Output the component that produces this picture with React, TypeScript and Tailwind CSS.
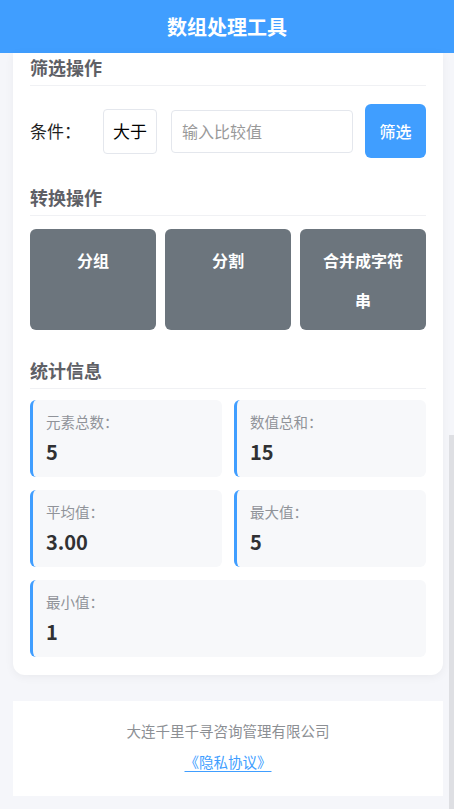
import React from "react";

const FONT = { fontFamily: '"Noto Sans CJK SC", "Noto Sans", sans-serif' };

const stats = [
  { label: "元素总数：", value: "5" },
  { label: "数值总和：", value: "15" },
  { label: "平均值：", value: "3.00" },
  { label: "最大值：", value: "5" },
  { label: "最小值：", value: "1", wide: true },
];

function SectionTitle({ children, className = "" }: { children: React.ReactNode; className?: string }) {
  return (
    <h3 className={`text-[18px] leading-[26px] font-bold text-[#5e6066] pb-[5px] border-b border-[#f0f1f4] ${className}`}>
      {children}
    </h3>
  );
}

export default function App() {
  return (
    <div className="relative h-[809px] w-full overflow-hidden bg-[#f5f6fa]" style={FONT}>
      <header className="h-[53px] bg-[#409eff] flex items-center justify-center">
        <h1 className="text-[20px] font-bold text-white">数组处理工具</h1>
      </header>

      <main className="ml-[13px] mr-[11px]">
        <section className="bg-white rounded-b-[12px] shadow-[0_2px_10px_rgba(0,0,0,0.05)] px-[17px] pt-[1px] pb-[18px]">
          <SectionTitle>筛选操作</SectionTitle>

          <div className="mt-[18px] flex items-center h-[54px]">
            <span className="w-[73px] shrink-0 text-[17px] text-[#1f1f1f]">条件：</span>
            <div className="w-[54px] h-[45px] shrink-0 flex items-center justify-center border border-[#e4e7ed] rounded-[4px] text-[17px] text-black">
              大于
            </div>
            <input
              placeholder="输入比较值"
              className="ml-[14px] flex-1 min-w-0 h-[43px] border border-[#e4e7ed] rounded-[4px] px-[10px] text-[16px] placeholder:text-[#999] outline-none"
            />
            <button className="ml-[12px] w-[61px] h-[54px] shrink-0 bg-[#409eff] rounded-[6px] text-white text-[16px] font-medium">
              筛选
            </button>
          </div>

          <SectionTitle className="mt-[26px]">转换操作</SectionTitle>

          <div className="mt-[13px] grid grid-cols-3 gap-[9px]">
            {["分组", "分割", "合并成字符串"].map((t) => (
              <button
                key={t}
                className="bg-[#6c757d] rounded-[6px] text-white text-[16px] font-bold leading-[40px] px-[16px] pt-[11px] pb-[10px] min-h-[101px] flex items-start justify-center text-center"
              >
                {t}
              </button>
            ))}
          </div>

          <SectionTitle className="mt-[27px]">统计信息</SectionTitle>

          <div className="mt-[11px] grid grid-cols-2 gap-x-[12px] gap-y-[13px]">
            {stats.map((s) => (
              <div
                key={s.label}
                className={`bg-[#f7f8fa] rounded-[6px] border-l-[3px] border-[#409eff] pl-[13px] pt-[12px] pb-[11px] ${s.wide ? "col-span-2" : ""}`}
              >
                <div className="text-[14.5px] leading-[20px] text-[#909399]">{s.label}</div>
                <div className="mt-[6px] text-[20px] leading-[28px] font-bold text-[#303133]">{s.value}</div>
              </div>
            ))}
          </div>
        </section>

        <footer className="mt-[26px] bg-white pt-[19px] pb-[23px] text-center">
          <p className="text-[14.5px] leading-[22px] text-[#8c8f94]">大连千里千寻咨询管理有限公司</p>
          <a href="#" className="inline-block mt-[9px] text-[14.5px] leading-[22px] text-[#409eff] underline underline-offset-[3px]">
            《隐私协议》
          </a>
        </footer>
      </main>

      <div className="absolute right-0 top-[435px] bottom-0 w-[5px] bg-[#dedfe3]" />
    </div>
  );
}
